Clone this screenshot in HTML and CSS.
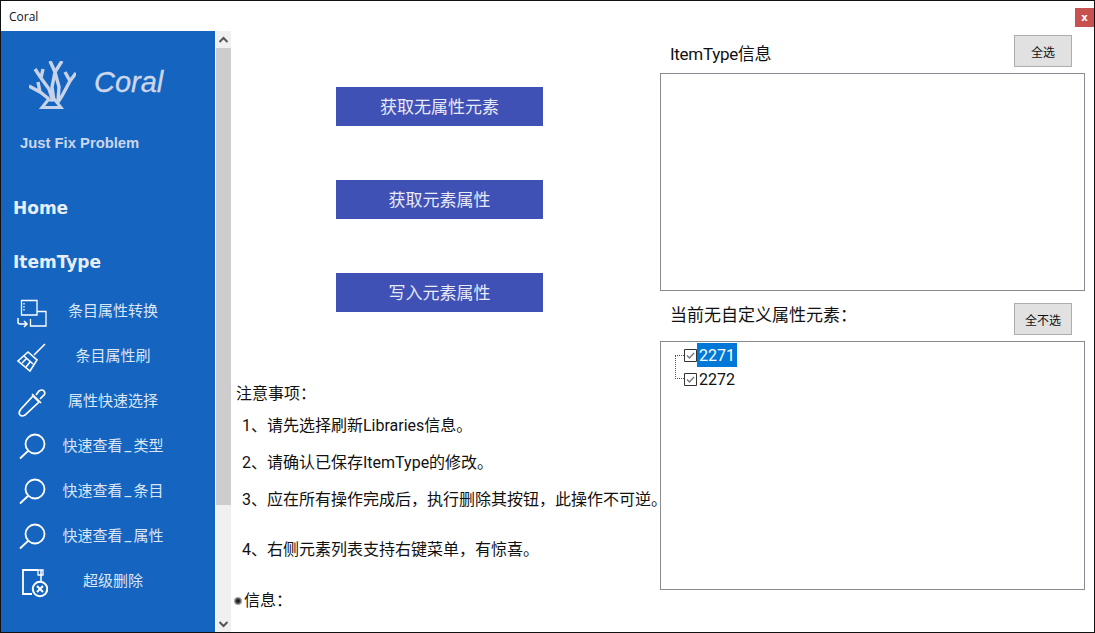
FILE: index.html
```html
<!DOCTYPE html>
<html lang="zh">
<head>
<meta charset="utf-8">
<title>Coral</title>
<link rel="stylesheet" href="styles.css">
</head>
<body>
<div class="window">
  <header class="titlebar">
    <span class="title">Coral</span>
    <button class="close">x</button>
  </header>
  <div class="content">
    <aside class="sidebar">
      <div class="brand">
        <svg class="logo" viewBox="0 0 47 48" width="47" height="48" fill="none" stroke="#c9d3e8" stroke-width="3.400">
          <path d="M21 0L26 11L23 26L25 40M33 0L26 11L30 26L29 40"/>
          <path d="M6 8L12 17L20 28L24 40M14 8L12 17"/>
          <path d="M36 11L41 20L33 35L29 41M47 12L41 20"/>
          <path d="M0 25L11 31L20 38M9 21L11 31"/>
          <path d="M19 39H26L32 46.500H13Z" stroke-width="3"/>
        </svg>
        <span class="brand-name">Coral</span>
      </div>
      <div class="slogan">Just Fix Problem</div>
      <div class="nav-head first">Home</div>
      <div class="nav-head">ItemType</div>
      <nav class="nav">
        <div class="nav-item">
          <svg class="ico" viewBox="0 0 32 32" fill="none" stroke="#fff" stroke-width="1.300"><path d="M5.500 2.500H21V17H5.500Z"/><path d="M21 13.500H30V28H14.500V21"/><path d="M8 5V14" stroke-dasharray="1.500 1.500"/><path d="M2 20V24Q2 26 4 26H11M8 23L11 26L8 29" stroke-width="1.500"/></svg>
          <span class="nav-label">条目属性转换</span>
        </div>
        <div class="nav-item">
          <svg class="ico" viewBox="0 0 32 32" fill="none" stroke="#fff" stroke-width="1.600"><path d="M29 1L18 12"/><path d="M12 9L21 17L14 28L2 18Z"/><path d="M8 13L17 21M6 20L11 15M10 24L14 19"/></svg>
          <span class="nav-label">条目属性刷</span>
        </div>
        <div class="nav-item">
          <svg class="ico" viewBox="0 0 32 32" fill="none" stroke="#fff" stroke-width="1.700"><path d="M17 8L23 14L9 27Q6 29 4 27Q2 25 5 21Z"/><path d="M16 6L25 15M20 7L23 3Q26 1 28 3Q30 6 27 8L24 11"/></svg>
          <span class="nav-label">属性快速选择</span>
        </div>
        <div class="nav-item">
          <svg class="ico" viewBox="0 0 32 32" fill="none" stroke="#fff" stroke-width="1.800"><circle cx="19" cy="11" r="9.500"/><path d="M12 18L4 25.500"/></svg>
          <span class="nav-label">快速查看<span class="us">_</span>类型</span>
        </div>
        <div class="nav-item">
          <svg class="ico" viewBox="0 0 32 32" fill="none" stroke="#fff" stroke-width="1.800"><circle cx="19" cy="11" r="9.500"/><path d="M12 18L4 25.500"/></svg>
          <span class="nav-label">快速查看<span class="us">_</span>条目</span>
        </div>
        <div class="nav-item">
          <svg class="ico" viewBox="0 0 32 32" fill="none" stroke="#fff" stroke-width="1.800"><circle cx="19" cy="11" r="9.500"/><path d="M12 18L4 25.500"/></svg>
          <span class="nav-label">快速查看<span class="us">_</span>属性</span>
        </div>
        <div class="nav-item">
          <svg class="ico" viewBox="0 0 32 32" fill="none" stroke="#fff" stroke-width="1.800"><path d="M22 2H7V26H16"/><path d="M25 2V13" stroke-width="1.500"/><path d="M22 2H27V7H22Z" stroke-width="1.300"/><circle cx="24" cy="21" r="7.200" stroke-width="2"/><path d="M21 18L27 24M27 18L21 24" stroke-width="2"/></svg>
          <span class="nav-label">超级删除</span>
        </div>
      </nav>
    </aside>
    <div class="scrollbar">
      <svg class="arrow" viewBox="0 0 15 17" width="15" height="17" fill="none" stroke="#555" stroke-width="2"><path d="M3.500 11L7.500 7L11.500 11"/></svg>
      <div class="thumb"></div>
      <svg class="arrow" viewBox="0 0 15 17" width="15" height="17" fill="none" stroke="#555" stroke-width="2"><path d="M3.500 7L7.500 11L11.500 7"/></svg>
    </div>
    <main class="main">
      <section class="actions">
        <div class="buttons">
          <button class="action">获取无属性元素</button>
          <button class="action">获取元素属性</button>
          <button class="action">写入元素属性</button>
        </div>
        <div class="notes">
          <p class="note-title">注意事项：</p>
          <p class="note n1">1、请先选择刷新Libraries信息。</p>
          <p class="note n2">2、请确认已保存ItemType的修改。</p>
          <p class="note n3">3、应在所有操作完成后，执行删除其按钮，此操作不可逆。</p>
          <p class="note n4">4、右侧元素列表支持右键菜单，有惊喜。</p>
          <p class="info"><span class="dot"></span>信息：</p>
        </div>
      </section>
      <section class="panels">
        <div class="panel-head top">
          <span class="panel-label">ItemType信息</span>
          <button class="small-btn">全选</button>
        </div>
        <div class="listbox upper"></div>
        <div class="panel-head lower-head">
          <span class="panel-label">当前无自定义属性元素：</span>
          <button class="small-btn">全不选</button>
        </div>
        <div class="listbox lower">
          <div class="tree">
            <span class="tree-line"></span>
            <div class="tree-row">
              <svg class="check" viewBox="0 0 13 13" width="13" height="13" fill="none"><path d="M.5.5H12.5V12.5H.5Z" stroke="#333"/><path d="M3 6.5L5.5 9L10 4" stroke="#777" stroke-width="1.4"/></svg>
              <span class="tree-text selected">2271</span>
            </div>
            <div class="tree-row">
              <svg class="check" viewBox="0 0 13 13" width="13" height="13" fill="none"><path d="M.5.5H12.5V12.5H.5Z" stroke="#333"/><path d="M3 6.5L5.5 9L10 4" stroke="#777" stroke-width="1.4"/></svg>
              <span class="tree-text">2272</span>
            </div>
          </div>
        </div>
      </section>
    </main>
  </div>
</div>
</body>
</html>
```
FILE: styles.css
```css
* { box-sizing: border-box; }
html, body { margin: 0; height: 100%; overflow: hidden; }
body { background: #fff; color: #111; font-family: Roboto, "Noto Sans CJK SC", sans-serif; font-size: 16px; }
p { margin: 0; }
button { font-family: inherit; border: 0; padding: 0; }

.window { width: 1095px; height: 633px; display: flex; flex-direction: column; border: 1px solid #111; }
.titlebar { height: 30px; flex: none; display: flex; align-items: center; justify-content: space-between; padding: 0 0 0 8px; }
.title { font-size: 12px; font-family: "Open Sans", "Noto Sans", sans-serif; }
.close { width: 19px; height: 19px; background: #c75050; color: #fff; font: bold 10px "DejaVu Sans", sans-serif; margin-top: 2px; }

.content { flex: 1; display: flex; min-height: 0; }

.sidebar { width: 214px; flex: none; background: #1565c0; color: #cdd6ea; }
.brand { display: flex; align-items: flex-start; height: 66px; margin-top: 30px; padding-left: 28px; }
.logo { flex: none; }
.brand-name { font: italic 29px "Liberation Sans", sans-serif; margin-left: 18px; margin-top: 5px; -webkit-text-stroke: .3px #cdd6ea; }
.slogan { font: bold 14.8px "Liberation Sans", sans-serif; margin: 8px 0 0 19px; }
.nav-head { color: #e8eef8; font: bold 17px "DejaVu Sans", sans-serif; margin-left: 12px; height: 26px; line-height: 26px; margin-top: 28px; }
.nav-head.first { margin-top: 44px; }
.nav { margin-top: 15px; }
.nav-item { height: 45px; display: flex; align-items: center; position: relative; padding-left: 15px; }
.ico { width: 32px; height: 32px; flex: none; margin-top: 2px; }
.nav-label { position: absolute; left: 10px; right: 0; text-align: center; font-size: 15px; color: #dbe6f5; margin-top: -6px; }
.us { display: inline-block; width: 11px; text-align: center; }

.scrollbar { width: 15px; flex: none; background: #f0f0f0; display: flex; flex-direction: column; margin-left: 1px; }
.arrow { flex: none; display: block; }
.thumb { height: 457px; background: #cdcdcd; }
.scrollbar .arrow:last-child { margin-top: auto; }

.main { flex: 1; display: flex; min-width: 0; }
.actions { width: 429px; flex: none; }
.buttons { display: flex; flex-direction: column; align-items: flex-start; gap: 54px; padding-top: 56px; padding-left: 105px; }
.action { width: 207px; height: 39px; background: #3f51b5; color: #e8eaf6; font-size: 17px; padding-bottom: 3px; }

.notes { margin-top: 70px; padding-left: 5px; }
.note-title { line-height: 24px; }
.note { line-height: 24px; padding-left: 6px; white-space: nowrap; }
.n1 { margin-top: 8px; }
.n2 { margin-top: 13px; }
.n3 { margin-top: 13px; }
.n4 { margin-top: 26px; }
.info { display: flex; align-items: center; margin-top: 27px; line-height: 24px; margin-left: -2px; }
.dot { width: 8px; height: 8px; border-radius: 50%; background: radial-gradient(circle, #222 0 25%, #999 60%, #ddd 100%); margin-right: 2px; }

.panels { width: 425px; flex: none; display: flex; flex-direction: column; }
.panel-head { display: flex; justify-content: space-between; align-items: flex-start; height: 50px; padding: 0 13px 0 10px; }
.panel-head.top { height: 42px; }
.panel-label { font-size: 17px; line-height: 24px; margin-top: 12px; }
.top .panel-label { margin-top: 11px; letter-spacing: -.3px; }
.small-btn { width: 58px; height: 32px; background: #e1e1e1; border: 1px solid #adadad; font-size: 12px; color: #111; margin-top: 12px; }
.top .small-btn { margin-top: 4px; }
.listbox { border: 1px solid #8a8a90; }
.upper { height: 218px; }
.lower { height: 249px; }
.tree { position: relative; padding: 1px 0 0 23px; }
.tree-row { display: flex; align-items: center; height: 24px; }
.check { flex: none; }
.tree-text { font-size: 16px; line-height: 24px; height: 24px; padding: 1px 2px 0; color: #111; }
.tree-text.selected { background: #0078d7; color: #fff; }
.tree-line { position: absolute; left: 14px; top: 13px; width: 9px; height: 24px; border: 1px dotted #555; border-right: 0; }
```
